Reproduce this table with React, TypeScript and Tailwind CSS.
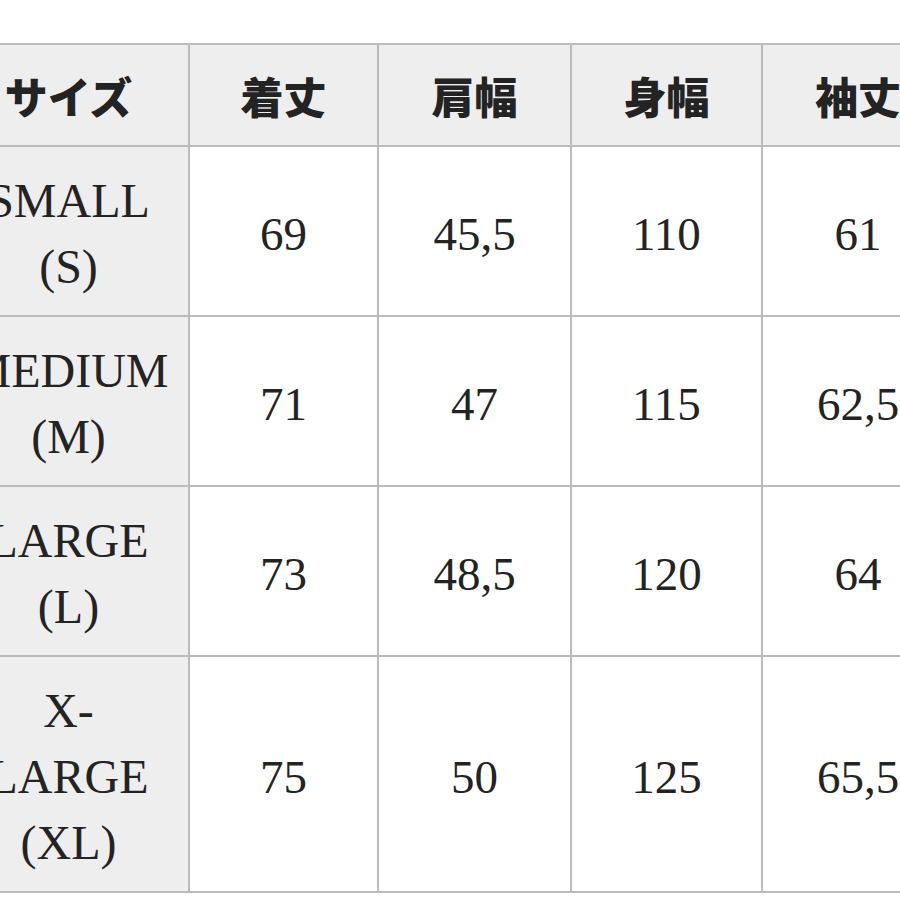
const headers = ['着丈', '肩幅', '身幅', '袖丈']

const rows: { label: string[]; values: string[] }[] = [
  { label: ['SMALL', '(S)'], values: ['69', '45,5', '110', '61'] },
  { label: ['MEDIUM', '(M)'], values: ['71', '47', '115', '62,5'] },
  { label: ['LARGE', '(L)'], values: ['73', '48,5', '120', '64'] },
  { label: ['X-', 'LARGE', '(XL)'], values: ['75', '50', '125', '65,5'] },
]

const serif = { fontFamily: '"Liberation Serif", "Times New Roman", serif' }
const jp = { fontFamily: '"Noto Sans CJK JP", "Noto Sans", sans-serif' }

export default function App() {
  return (
    <div className="h-[900px] w-[900px] overflow-hidden bg-white pt-[43px]">
      <table className="ml-[-53px] w-[1006px] table-fixed border-collapse text-[#232323]">
        <colgroup>
          <col className="w-[241px]" />
          <col className="w-[189px]" />
          <col className="w-[193px]" />
          <col className="w-[191px]" />
          <col className="w-[192px]" />
        </colgroup>
        <thead>
          <tr>
            <th
              style={jp}
              className="border-2 border-[#bbbbbb] bg-[#eeeeee] py-[17px] text-center text-[43px] font-black leading-[66px]"
            >
              サイズ
            </th>
            {headers.map((h) => (
              <th
                key={h}
                style={jp}
                className="border-2 border-[#bbbbbb] bg-[#eeeeee] py-[17px] text-center text-[43px] font-black leading-[66px]"
              >
                {h}
              </th>
            ))}
          </tr>
        </thead>
        <tbody>
          {rows.map((r) => (
            <tr key={r.label.join('')}>
              <td
                style={serif}
                className="border-2 border-[#bbbbbb] bg-[#eeeeee] pb-[15px] pt-[21px] text-center text-[48px] leading-[66px]"
              >
                {r.label.map((l) => (
                  <div key={l}>{l}</div>
                ))}
              </td>
              {r.values.map((v, i) => (
                <td
                  key={i}
                  style={serif}
                  className="border-2 border-[#bbbbbb] bg-white pb-[15px] pt-[21px] text-center text-[47px] leading-[66px]"
                >
                  {v}
                </td>
              ))}
            </tr>
          ))}
        </tbody>
      </table>
    </div>
  )
}
